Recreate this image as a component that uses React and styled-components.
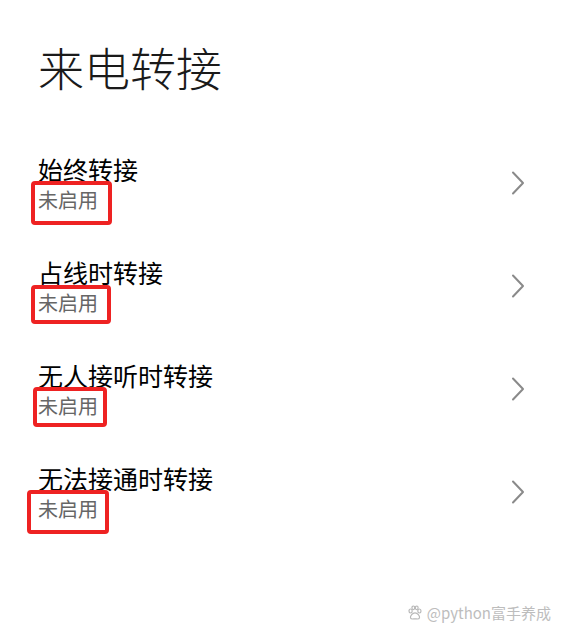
import React from 'react'
import styled, { createGlobalStyle } from 'styled-components'

const ITEMS = [
  { title: '始终转接', mark: { left: -7, top: -4, width: 81, height: 44 } },
  { title: '占线时转接', mark: { left: -7, top: -3, width: 80, height: 39 } },
  { title: '无人接听时转接', mark: { left: -5, top: -4, width: 74, height: 40 } },
  { title: '无法接通时转接', mark: { left: -11, top: -4, width: 82, height: 44 } },
]

export default function App() {
  return (
    <Page>
      <GlobalStyle />
      <Title>来电转接</Title>
      <List>
        {ITEMS.map((item) => (
          <Row key={item.title}>
            <Texts>
              <RowTitle>{item.title}</RowTitle>
              <Status>
                未启用
                <Mark style={item.mark} />
              </Status>
            </Texts>
            <Chevron />
          </Row>
        ))}
      </List>
      <Watermark>
        <Paw />
        <span>@python富手养成</span>
      </Watermark>
    </Page>
  )
}

function Chevron() {
  return (
    <svg width="14" height="24" viewBox="0 0 14 24" fill="none">
      <path
        d="M2 1.5 L12 12 L2 22.5"
        stroke="#8a8a8a"
        strokeWidth="2"
        strokeLinecap="round"
        strokeLinejoin="round"
      />
    </svg>
  )
}

function Paw() {
  return (
    <svg width="16" height="16" viewBox="0 0 16 16" fill="none" stroke="#b8b8b8" strokeWidth="1.2">
      <ellipse cx="3.6" cy="6" rx="1.6" ry="2" />
      <ellipse cx="12.4" cy="6" rx="1.6" ry="2" />
      <ellipse cx="6.3" cy="2.8" rx="1.4" ry="1.8" />
      <ellipse cx="9.7" cy="2.8" rx="1.4" ry="1.8" />
      <path d="M8 7.8 C5.5 7.8 3 10.8 3.5 12.8 C4 14.8 6.5 13.8 8 13.8 C9.5 13.8 12 14.8 12.5 12.8 C13 10.8 10.5 7.8 8 7.8 Z" />
    </svg>
  )
}

const GlobalStyle = createGlobalStyle`
  html, body {
    margin: 0;
    padding: 0;
    background: #ffffff;
  }
  body {
    font-family: "Noto Sans CJK SC", "Noto Sans", sans-serif;
    color: #111;
  }
`

const Page = styled.div`
  position: relative;
  width: 561px;
  height: 634px;
  box-sizing: border-box;
  padding: 38px 38px 0 38px;
  overflow: hidden;
`

const Title = styled.h1`
  margin: 0;
  font-size: 46px;
  line-height: 56px;
  font-weight: 300;
  color: #1a1a1a;
`

const List = styled.div`
  margin-top: 59px;
  display: flex;
  flex-direction: column;
`

const Row = styled.div`
  height: 103px;
  display: flex;
  align-items: flex-start;
  justify-content: space-between;

  & > svg {
    margin-top: 18px;
    margin-right: -2px;
  }
`

const Texts = styled.div`
  display: flex;
  flex-direction: column;
`

const RowTitle = styled.div`
  font-size: 25px;
  line-height: 32px;
  font-weight: 400;
  color: #000;
`

const Status = styled.div`
  position: relative;
  align-self: flex-start;
  font-size: 20px;
  line-height: 30px;
  color: #666;
`

const Mark = styled.span`
  position: absolute;
  box-sizing: border-box;
  border: 4px solid #ee2222;
  border-radius: 4px;
`

const Watermark = styled.div`
  position: absolute;
  right: 10px;
  bottom: 11px;
  display: flex;
  align-items: center;
  gap: 4px;
  font-family: "Noto Sans CJK SC", "Noto Sans", sans-serif;
  font-size: 15px;
  color: #bdbdbd;
`
